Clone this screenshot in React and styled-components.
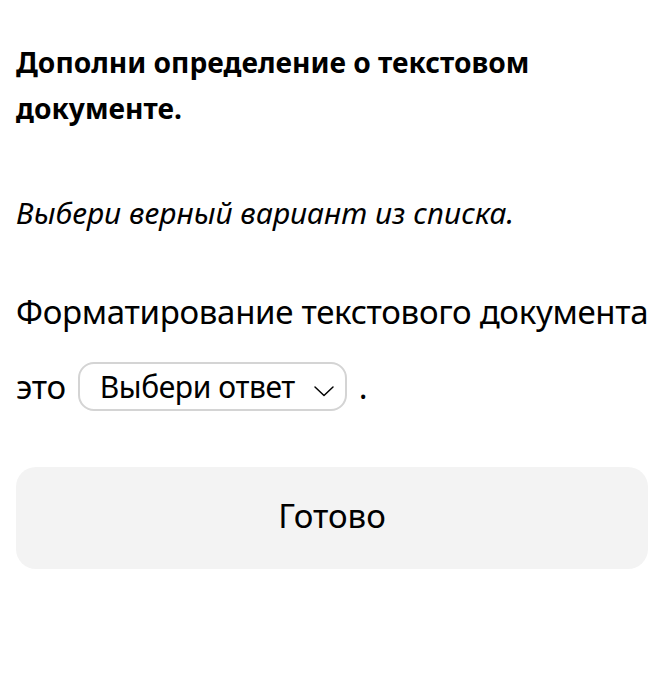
import React from 'react';
import styled, { createGlobalStyle } from 'styled-components';

const GlobalStyle = createGlobalStyle`
  body {
    margin: 0;
    background: #fff;
    font-family: "Noto Sans", "Open Sans", sans-serif;
    color: #000;
  }
`;

const Container = styled.div`
  padding: 39px 14px 0 16px;
  display: flex;
  flex-direction: column;
`;

const Title = styled.h1`
  margin: 0;
  max-width: 560px;
  font-size: 28.2px;
  font-weight: 700;
  line-height: 46px;
`;

const Hint = styled.p`
  margin: 62px 0 0;
  font-size: 30px;
  font-style: italic;
  line-height: 40px;
`;

const Question = styled.div`
  margin-top: 59px;
  font-size: 33px;
  line-height: 40px;
  letter-spacing: -0.3px;
  white-space: nowrap;
`;

const AnswerRow = styled.div`
  margin-top: 30px;
  display: flex;
  align-items: center;
  font-size: 33px;
  letter-spacing: -0.3px;
`;

const Select = styled.div`
  margin: 0 12px 0 12px;
  height: 49px;
  box-sizing: border-box;
  width: 269px;
  border: 2px solid #d4d4d4;
  border-radius: 16px;
  display: flex;
  align-items: center;
  justify-content: space-between;
  padding: 0 10px 0 20px;
  font-size: 30px;
  letter-spacing: -0.4px;
`;

const Chevron = styled.svg`
  width: 22px;
  height: 12px;
  margin-top: 8px;
`;

const Dot = styled.span``;

const Button = styled.button`
  margin-top: 56px;
  height: 102px;
  padding-bottom: 6px;
  border: none;
  border-radius: 20px;
  background: #f3f3f3;
  font-family: inherit;
  font-size: 33px;
  color: #000;
  cursor: pointer;
`;

export default function App() {
  return (
    <>
      <GlobalStyle />
      <Container>
        <Title>Дополни определение о текстовом документе.</Title>
        <Hint>Выбери верный вариант из списка.</Hint>
        <Question>Форматирование текстового документа</Question>
        <AnswerRow>
          это
          <Select>
            Выбери ответ
            <Chevron viewBox="0 0 22 12" fill="none" stroke="#000" strokeWidth="1.5" strokeLinecap="round" strokeLinejoin="round">
              <path d="M2 2l9 8.5 9-8.5" />
            </Chevron>
          </Select>
          <Dot>.</Dot>
        </AnswerRow>
        <Button>Готово</Button>
      </Container>
    </>
  );
}
